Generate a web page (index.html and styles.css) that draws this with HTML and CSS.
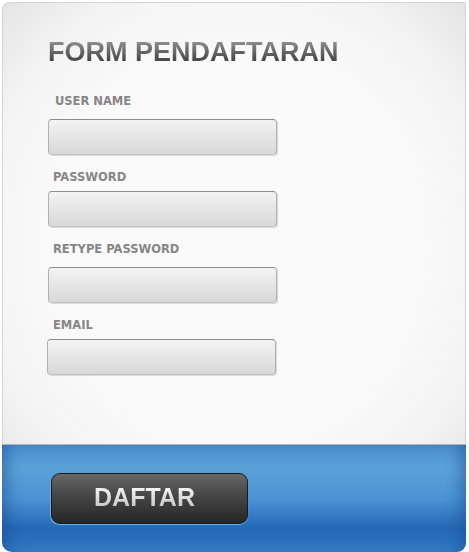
FILE: index.html
```html
<!doctype html>
<html>

<head lang="id">
  <meta charset="utf-8">
  <meta name="viewport" content="width=device-width, initial-scale=1">
  <title>Form Pendaftaran</title>
  <link rel="stylesheet" href="styles.css">
</head>

<body>
  <form class="panel" action="#" method="post">
    <div class="panel-top">
      <h1 class="title">FORM PENDAFTARAN</h1>

      <div class="field">
        <label for="username" class="label label-first">USER NAME</label>
        <input type="text" id="username" name="username" class="textbox" />
      </div>

      <div class="field">
        <label for="password" class="label">PASSWORD</label>
        <input type="password" id="password" name="password" class="textbox" />
      </div>

      <div class="field">
        <label for="repassword" class="label">RETYPE PASSWORD</label>
        <input type="password" id="repassword" name="repassword" class="textbox" />
      </div>

      <div class="field">
        <label for="email" class="label">EMAIL</label>
        <input type="text" id="email" name="email" class="textbox textbox-last" />
      </div>
    </div>

    <div class="panel-bottom">
      <button type="submit" class="daftar"><span>DAFTAR</span></button>
    </div>
  </form>
</body>

</html>
```

FILE: styles.css
```css
body {
  margin: 0;
  background: #fff;
  font-family: "Liberation Sans", Arial, sans-serif;
}

.panel {
  display: block;
  width: 464px;
  margin: 2px 0 0 2px;
}

.panel-top {
  height: 441px;
  padding: 0 0 0 45px;
  border: 1px solid #d4d4d4;
  border-bottom-color: #b4b4b4;
  border-radius: 8px 2px 0 0;
  background: radial-gradient(ellipse at 50% 55%, #fafafa 55%, #f3f3f3 80%, #e4e4e4 100%);
}

.title {
  margin: 34px 0 27px 0;
  font-size: 27px;
  line-height: 31px;
  font-weight: bold;
  color: #444;
  background: linear-gradient(#a0a0a0, #5e5e5e 55%, #2e2e2e);
  -webkit-background-clip: text;
  background-clip: text;
  -webkit-text-fill-color: transparent;
}

.field {
  margin-bottom: 16px;
}

.label {
  display: block;
  margin: 0 0 11px 5px;
  font-family: "DejaVu Sans", Verdana, sans-serif;
  font-size: 11.5px;
  line-height: 13px;
  font-weight: bold;
  color: #868686;
}

.label-first {
  margin-left: 7px;
}

.field:nth-child(odd) .label {
  margin-bottom: 7px;
}

.textbox {
  display: block;
  box-sizing: border-box;
  width: 229px;
  height: 36px;
  margin: 0;
  padding: 0 8px;
  border: 1px solid #b0b0b0;
  border-top-color: #8c8c8c;
  border-bottom-color: #c4c4c4;
  border-radius: 4px;
  background: linear-gradient(#f3f3f3, #e6e6e6 50%, #d8d8d8);
  box-shadow: 1px 1px 0 rgba(0, 0, 0, .12);
  font-size: 14px;
  color: #444;
  outline: none;
}

.textbox-last {
  margin-left: -1px;
}

.panel-bottom {
  height: 107px;
  padding: 28px 0 0 49px;
  box-sizing: border-box;
  border-radius: 0 0 9px 10px;
  background: linear-gradient(#4a8ecf 0%, #5aa1d8 22%, #4b93d3 50%, #2468b6 78%, #2a70bd 90%, #3b80c8 100%);
  box-shadow: inset 14px 0 14px -8px rgba(20, 70, 140, .45), inset -14px 0 14px -8px rgba(20, 70, 140, .45);
}

.daftar {
  display: block;
  box-sizing: border-box;
  width: 197px;
  height: 51px;
  margin: 0;
  padding: 0 10px 3px 0;
  border: 1px solid #1a1a1a;
  border-radius: 9px;
  background: linear-gradient(#676767, #454545 45%, #262626 100%);
  box-shadow: -1px 1px 0 #5fb0ea, 0 1px 1px rgba(140, 200, 245, .6);
  font-family: "Liberation Sans", Arial, sans-serif;
  font-size: 25px;
  font-weight: bold;
  cursor: pointer;
}

.daftar span {
  color: #ddd;
  background: linear-gradient(#ffffff, #d8d8d8 60%, #bdbdbd);
  -webkit-background-clip: text;
  background-clip: text;
  -webkit-text-fill-color: transparent;
}
```
